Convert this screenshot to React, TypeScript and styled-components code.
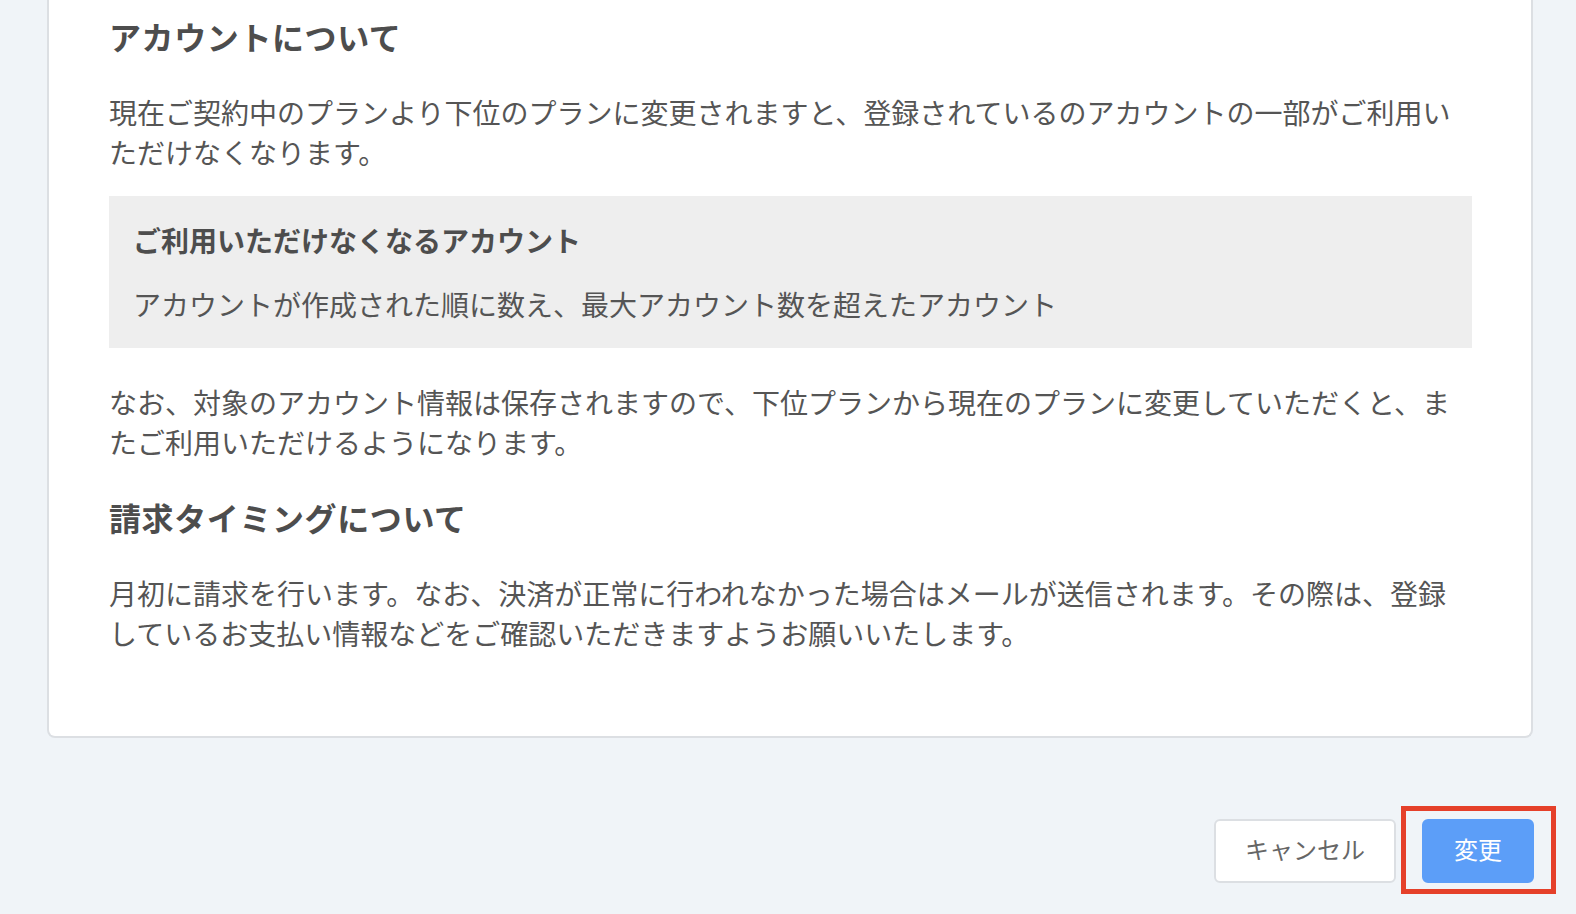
import React from 'react';
import styled, { createGlobalStyle } from 'styled-components';

const GlobalStyle = createGlobalStyle`
  html, body {
    margin: 0;
    padding: 0;
    background: #f0f4f8;
  }
  body {
    font-family: "Noto Sans CJK JP", "Noto Sans", sans-serif;
    color: #555555;
  }
`;

const Page = styled.div`
  min-height: 914px;
  display: flex;
  flex-direction: column;
`;

const Card = styled.section`
  margin: 0 43px 0 47px;
  padding: 12px 59px 83px 60px;
  background: #ffffff;
  border: 2px solid #dcdfe3;
  border-top: none;
  border-radius: 0 0 8px 8px;
`;

const Heading = styled.h2<{ $gap?: number }>`
  margin: 0 0 ${(p) => p.$gap ?? 32}px;
  font-size: 32px;
  line-height: 48px;
  letter-spacing: 0.6px;
  font-weight: 700;
  color: #4d4d4d;
`;

const Text = styled.p<{ $gap?: number }>`
  margin: 0 0 ${(p) => p.$gap ?? 0}px;
  font-size: 28px;
  line-height: 40px;
  color: #555555;
`;

const NoticeBox = styled.div`
  margin-bottom: 34px;
  padding: 24px 24px 24px;
  background: #eeeeee;
`;

const NoticeTitle = styled.h3`
  margin: 0 0 24px;
  font-size: 28px;
  line-height: 40px;
  font-weight: 700;
  color: #4d4d4d;
`;

const Footer = styled.div`
  display: flex;
  justify-content: flex-end;
  gap: 26px;
  padding: 81px 42px 0 0;
`;

const Button = styled.button<{ $primary?: boolean }>`
  position: relative;
  height: 64px;
  padding: 0 ${(p) => (p.$primary ? 30 : 29)}px 4px;
  font-family: inherit;
  font-size: 24px;
  line-height: 1;
  border-radius: 6px;
  cursor: pointer;
  border: 2px solid ${(p) => (p.$primary ? '#5c9ef8' : '#dcdfe3')};
  background: ${(p) => (p.$primary ? '#5c9ef8' : '#ffffff')};
  color: ${(p) => (p.$primary ? '#ffffff' : '#666666')};
`;

const Highlight = styled.span`
  position: absolute;
  top: -15px;
  bottom: -13px;
  left: -23px;
  right: -24px;
  border: 5px solid #e5402a;
  pointer-events: none;
`;

export default function App() {
  return (
    <Page>
      <GlobalStyle />
      <Card>
        <Heading>アカウントについて</Heading>
        <Text $gap={24}>
          現在ご契約中のプランより下位のプランに変更されますと、登録されているのアカウントの一部がご利用いただけなくなります。
        </Text>
        <NoticeBox>
          <NoticeTitle>ご利用いただけなくなるアカウント</NoticeTitle>
          <Text>アカウントが作成された順に数え、最大アカウント数を超えたアカウント</Text>
        </NoticeBox>
        <Text $gap={31}>
          なお、対象のアカウント情報は保存されますので、下位プランから現在のプランに変更していただくと、またご利用いただけるようになります。
        </Text>
        <Heading $gap={32}>請求タイミングについて</Heading>
        <Text>
          月初に請求を行います。なお、決済が正常に行われなかった場合はメールが送信されます。その際は、登録しているお支払い情報などをご確認いただきますようお願いいたします。
        </Text>
      </Card>
      <Footer>
        <Button type="button">キャンセル</Button>
        <Button type="button" $primary>
          変更
          <Highlight />
        </Button>
      </Footer>
    </Page>
  );
}
